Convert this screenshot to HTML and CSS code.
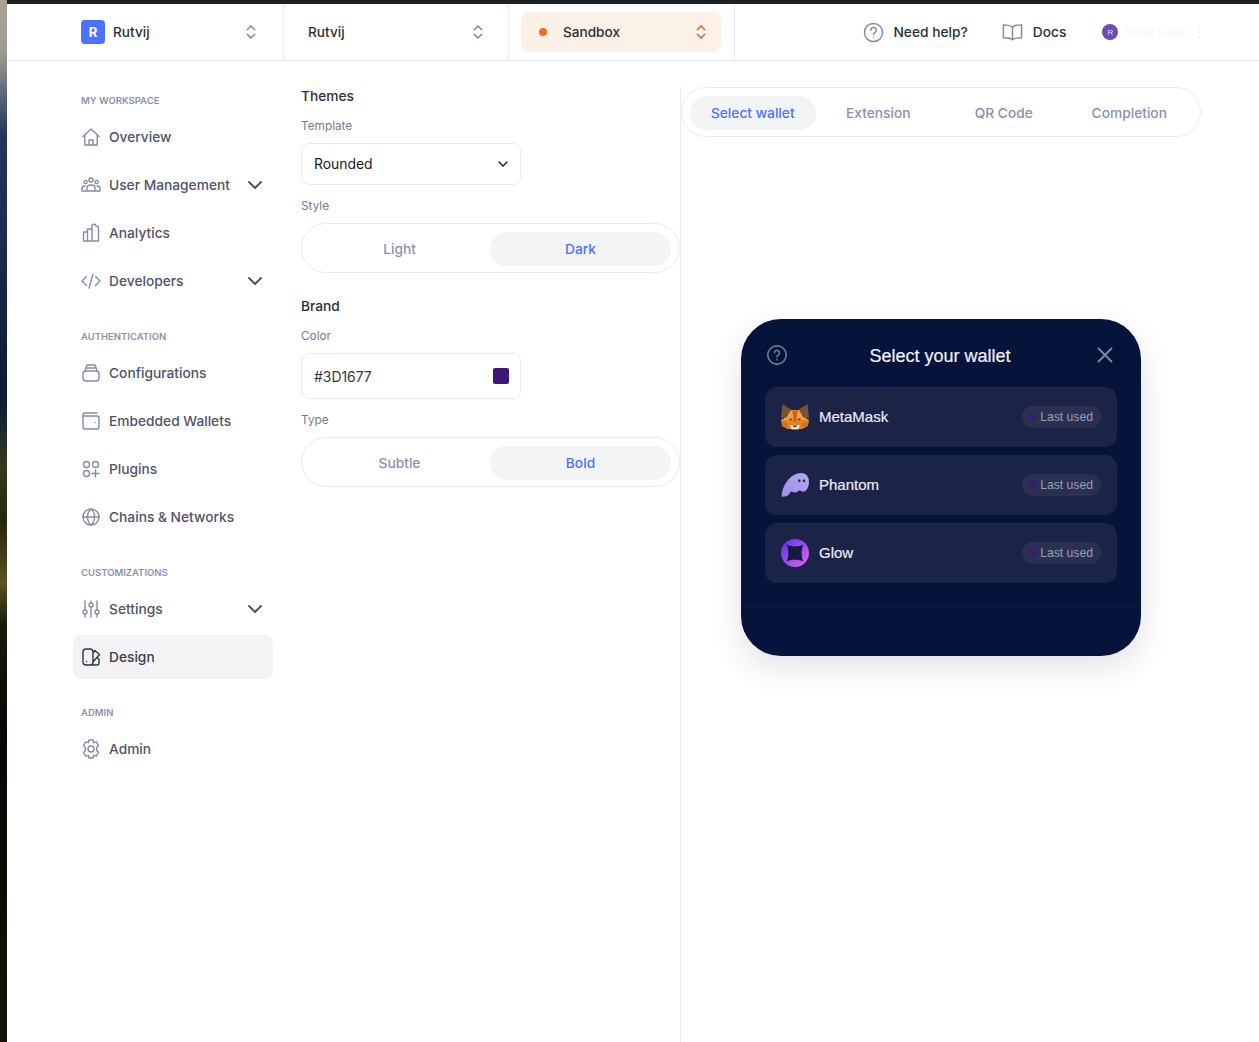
FILE: index.html
```html
<!DOCTYPE html>
<html lang="en">
<head>
<meta charset="utf-8">
<title>Design</title>
<link rel="stylesheet" href="styles.css">
</head>
<body>
<div class="page">
  <div class="wallpaper"></div>
  <div class="app">
    <div class="topline"></div>
    <header class="header">
      <div class="hsec hsec-org">
        <span class="logo">R</span><span class="hname">Rutvij</span>
        <svg class="updown" viewBox="0 0 12 16"><path d="M2 6l4-4 4 4M2 10l4 4 4-4"/></svg>
      </div>
      <div class="hsec hsec-proj">
        <span class="hname">Rutvij</span>
        <svg class="updown" viewBox="0 0 12 16"><path d="M2 6l4-4 4 4M2 10l4 4 4-4"/></svg>
      </div>
      <div class="hsec hsec-env">
        <div class="envpill">
          <span class="envdot"></span><span class="hname">Sandbox</span>
          <svg class="updown updown-env" viewBox="0 0 12 16"><path d="M2 6l4-4 4 4M2 10l4 4 4-4"/></svg>
        </div>
      </div>
      <div class="hright">
        <a class="hlink">
          <svg class="hicon" viewBox="0 0 22 22"><circle cx="11" cy="11" r="9.5"/><path d="M8.3 8.6a2.8 2.8 0 1 1 4.2 2.4c-1 .6-1.5 1.1-1.5 2.2"/><path d="M11 16.2v.1"/></svg>
          <span>Need help?</span>
        </a>
        <a class="hlink hlink-docs">
          <svg class="hicon hicon-book" viewBox="0 0 22 18"><path d="M11 4C9.5 2.2 6.500 1.500 1.500 1.500v13.500c5 0 8 .5 9.500 2 1.500-1.500 4.500-2 9.500-2V1.500C15.500 1.500 12.500 2.200 11 4zM11 4v13"/></svg>
          <span>Docs</span>
        </a>
        <div class="user">
          <span class="avatar">R</span>
          <span class="username">Rutvij Patel</span>
          <span class="kebab">⋮</span>
        </div>
      </div>
    </header>
    <main class="main">
      <nav class="sidebar">
        <div class="navlabel">MY WORKSPACE</div>
        <a class="navitem">
          <svg class="navicon" viewBox="0 0 20 20"><path d="M2 9.500L10 2l8 7.500M3.800 8v10h12.400V8M8 18v-5h4v5"/></svg>
          <span>Overview</span>
        </a>
        <a class="navitem">
          <svg class="navicon" viewBox="0 0 20 20"><circle cx="10" cy="5" r="2"/><circle cx="4.500" cy="7" r="1.600"/><circle cx="15.500" cy="7" r="1.600"/><path d="M6 16v-3.500c0-1.500 1.500-2.500 4-2.500s4 1 4 2.500V16M1 16v-2.500c0-1.500 1-2.500 3-2.500M19 16v-2.500c0-1.500-1-2.500-3-2.500M1 16h18"/></svg>
          <span>User Management</span>
          <svg class="navcaret" viewBox="0 0 14 8"><path d="M1 1l6 6 6-6"/></svg>
        </a>
        <a class="navitem">
          <svg class="navicon" viewBox="0 0 20 20"><path d="M2.500 9h4v9h-4zM6.500 6h4.500v12H6.500zM11 3.500a2 2 0 0 1 4-.5h.5a2 2 0 0 1 2 2v13H11z"/></svg>
          <span>Analytics</span>
        </a>
        <a class="navitem">
          <svg class="navicon" viewBox="0 0 20 20"><path d="M5.500 5.500L1 10l4.500 4.500M14.500 5.500L19 10l-4.500 4.500M12 3L8 17"/></svg>
          <span>Developers</span>
          <svg class="navcaret" viewBox="0 0 14 8"><path d="M1 1l6 6 6-6"/></svg>
        </a>

        <div class="navlabel navlabel-next">AUTHENTICATION</div>
        <a class="navitem">
          <svg class="navicon" viewBox="0 0 20 20"><rect x="2" y="8" width="16" height="10" rx="3"/><path d="M4 8l1.500-5a1.500 1.500 0 0 1 1.500-1h6a1.500 1.500 0 0 1 1.500 1L16 8M5 5h10"/></svg>
          <span>Configurations</span>
        </a>
        <a class="navitem">
          <svg class="navicon" viewBox="0 0 20 20"><path d="M16 2H4a2 2 0 0 0-2 2v12a2 2 0 0 0 2 2h12a2 2 0 0 0 2-2V7a2 2 0 0 0-2-2H2M14 11.500h.1"/></svg>
          <span>Embedded Wallets</span>
        </a>
        <a class="navitem">
          <svg class="navicon" viewBox="0 0 20 20"><circle cx="5.500" cy="5.500" r="3"/><circle cx="14.500" cy="5.500" r="3"/><circle cx="5.500" cy="14.500" r="3"/><path d="M14.500 11v7M11 14.500h7"/></svg>
          <span>Plugins</span>
        </a>
        <a class="navitem">
          <svg class="navicon" viewBox="0 0 20 20"><circle cx="10" cy="10" r="8"/><path d="M2 10h16M10 2c-2.500 2.200-3.500 5-3.500 8s1 5.800 3.500 8c2.500-2.200 3.500-5 3.500-8s-1-5.800-3.500-8z"/></svg>
          <span>Chains &amp; Networks</span>
        </a>

        <div class="navlabel navlabel-next">CUSTOMIZATIONS</div>
        <a class="navitem">
          <svg class="navicon" viewBox="0 0 20 20"><path d="M4 2v9M4 15v3M10 2v2M10 8v10M16 2v9M16 15v3"/><circle cx="4" cy="13" r="2"/><circle cx="10" cy="6" r="2"/><circle cx="16" cy="13" r="2"/></svg>
          <span>Settings</span>
          <svg class="navcaret" viewBox="0 0 14 8"><path d="M1 1l6 6 6-6"/></svg>
        </a>
        <a class="navitem navitem-active">
          <svg class="navicon" viewBox="0 0 20 20"><path d="M5 2h4a3 3 0 0 1 3 3v10a3 3 0 0 1-3 3H5a3 3 0 0 1-3-3V5a3 3 0 0 1 3-3zM12 6l2-2.500 4.500 4-6.500 7.500M9 18h7a2 2 0 0 0 2-2v-4l-1.500-1M5.500 14.500h.1"/></svg>
          <span>Design</span>
        </a>

        <div class="navlabel navlabel-next">ADMIN</div>
        <a class="navitem">
          <svg class="navicon navicon-gear" viewBox="0 0 20 20"><circle cx="10" cy="10" r="3"/><path d="M8 1h4l.7 2.700 2.600-.8 2.200 3.500-1.900 2v3.200l1.900 2-2.200 3.500-2.600-.8L12 19H8l-.7-2.700-2.600.8-2.200-3.500 1.900-2V8.400l-1.900-2 2.200-3.500 2.600.8z"/></svg>
          <span>Admin</span>
        </a>
      </nav>

      <section class="themes">
        <h2 class="heading">Themes</h2>
        <label class="fieldlabel">Template</label>
        <div class="select">
          <span>Rounded</span>
          <svg class="selectcaret" viewBox="0 0 10 6"><path d="M1 1l4 4 4-4"/></svg>
        </div>
        <label class="fieldlabel fieldlabel-next">Style</label>
        <div class="toggle">
          <span class="toggleopt">Light</span>
          <span class="toggleopt toggleopt-on">Dark</span>
        </div>
        <h2 class="heading heading-next">Brand</h2>
        <label class="fieldlabel">Color</label>
        <div class="colorfield">
          <span class="colorvalue">#3D1677</span>
          <span class="swatch"></span>
        </div>
        <label class="fieldlabel fieldlabel-next">Type</label>
        <div class="toggle">
          <span class="toggleopt">Subtle</span>
          <span class="toggleopt toggleopt-on">Bold</span>
        </div>
      </section>

      <section class="preview">
        <div class="tabs">
          <span class="tab tab-on">Select wallet</span>
          <span class="tab">Extension</span>
          <span class="tab">QR Code</span>
          <span class="tab">Completion</span>
        </div>
        <div class="modal">
          <div class="modalhead">
            <svg class="modalicon" viewBox="0 0 20 20"><circle cx="10" cy="10" r="9.200"/><path d="M7.500 7.800a2.500 2.500 0 1 1 3.800 2.200c-.9.500-1.300 1-1.300 1.900M10 14.500v.2"/></svg>
            <span class="modaltitle">Select your wallet</span>
            <svg class="modalicon modalclose" viewBox="0 0 16 16"><path d="M1.500 1.500l13 13M14.500 1.500l-13 13"/></svg>
          </div>
          <div class="walletlist">
            <div class="wallet">
              <svg class="walleticon" viewBox="0 0 28 26">
                <path fill="#7b5232" d="M1.500 0L11 6h6l9.500-6L28 14H0z"/>
                <path fill="#e8812a" d="M6 13l4-7h8l4 7 6 3-1 6-6 3H7l-6-3-1-6z"/>
                <path fill="#f3a04a" d="M10 6l3 7-5 3-8 0 6-3zM18 6l-3 7 5 3 8 0-6-3z"/>
                <path fill="#c9651d" d="M11.500 7h5L15 18h-2z"/>
                <path fill="#2b2420" d="M8 14.500l3 .5-1.500 1.500zM20 14.500l-3 .5 1.500 1.500z"/>
                <path fill="#cf7424" d="M1 18l6 1 1 4-7-1zM27 18l-6 1-1 4 7-1z"/>
                <path fill="#e9dccf" d="M9 21h10l-1.500 4.500h-7z"/>
                <path fill="#3b3632" d="M11.800 21.500h4.400l-1 1.500h-2.400z"/>
              </svg>
              <span class="walletname">MetaMask</span>
              <span class="lastused"><i class="lastdot"></i>Last used</span>
            </div>
            <div class="wallet">
              <svg class="walleticon" viewBox="0 0 28 28">
                <defs><linearGradient id="ph" x1="0" y1="1" x2="1" y2="0"><stop offset="0" stop-color="#9f8fe6"/><stop offset="1" stop-color="#b3a8ee"/></linearGradient></defs>
                <path fill="url(#ph)" d="M.7 25C1 15 9 2 20.700 2 25 2 28 6 28 10.700 28 16 25.500 20.700 22 20.700 20.500 20.700 20 19.500 18.500 19.500 17 19.500 16.500 21.500 14 21.500 12 21.500 11.500 20.500 10.500 20.500 9 20.500 8.500 24.700 5 25.200 3 25.500 1 26.500.7 25z"/>
                <ellipse cx="18.300" cy="9.700" rx="1.200" ry="1.500" fill="#232a4d"/><ellipse cx="23" cy="9.700" rx="1.200" ry="1.500" fill="#232a4d"/>
              </svg>
              <span class="walletname">Phantom</span>
              <span class="lastused"><i class="lastdot"></i>Last used</span>
            </div>
            <div class="wallet">
              <svg class="walleticon" viewBox="0 0 28 28">
                <defs><linearGradient id="gl" x1="0" y1="0" x2="1" y2="1"><stop offset="0" stop-color="#5b2df0"/><stop offset="1" stop-color="#e06ae8"/></linearGradient></defs>
                <circle cx="14" cy="14" r="14" fill="url(#gl)"/>
                <path fill="#111a3f" d="M5.500 5.500C10 8 18 8 22.500 5.500 20 10 20 18 22.500 22.500 18 20 10 20 5.500 22.500 8 18 8 10 5.500 5.500z"/>
              </svg>
              <span class="walletname">Glow</span>
              <span class="lastused"><i class="lastdot"></i>Last used</span>
            </div>
          </div>
          <div class="modalfoot"></div>
        </div>
      </section>
    </main>
  </div>
</div>
</body>
</html>
```
FILE: styles.css
```css
* { box-sizing: border-box; }
html, body { margin: 0; padding: 0; height: 100%; background: #fff; }
body { font-family: Inter, "Liberation Sans", sans-serif; overflow: hidden; }
.page { display: flex; height: 1042px; }
.wallpaper {
  width: 7px; flex: none;
  background: linear-gradient(180deg, #a8a294 0, #a09c92 5%, #5d6a7a 9%, #23345e 13%, #1a2a4e 24%, #0c1a34 38%, #1a2a28 41%, #3a3a1e 45%, #28260f 50%, #5a5222 56%, #1a1a0a 60%, #050805 70%, #0c0c04 85%, #16120a 100%);
}
.app { flex: 1; min-width: 0; display: flex; flex-direction: column; }
.topline { height: 4px; background: #1e2124; flex: none; }

.header { height: 57px; flex: none; display: flex; border-bottom: 1px solid #e9e9f1; }
.hsec { display: flex; align-items: center; border-right: 1px solid #e9e9f1; }
.hsec-org { width: 277px; padding-left: 74px; }
.hsec-proj { width: 225px; padding-left: 24px; }
.hsec-env { width: 226px; padding-left: 12px; }
.logo { width: 24px; height: 24px; border-radius: 4px; background: #4c73ff; color: #fff; font-size: 13px; font-weight: 700; display: flex; align-items: center; justify-content: center; margin-right: 8px; }
.hname { font-size: 13.600px; font-weight: 500; color: #2d2f36; }
.updown { width: 12px; height: 16px; fill: none; stroke: #7d7f94; stroke-width: 1.400; margin-left: auto; margin-right: 26px; }
.hsec-proj .updown { margin-right: 24px; }
.envpill { width: 200px; height: 40px; border-radius: 8px; background: #fcf1e7; display: flex; align-items: center; padding-left: 18px; }
.envdot { width: 8px; height: 8px; border-radius: 50%; background: #f5711f; margin-right: 16px; }
.updown-env { stroke: #c9611d; margin-right: 14px; }
.hright { flex: 1; display: flex; align-items: center; justify-content: flex-end; padding-right: 53px; }
.hlink { display: flex; align-items: center; gap: 9px; font-size: 13.750px; font-weight: 500; color: #2d2f36; margin-right: 34px; }
.hlink-docs { gap: 10px; margin-right: 36px; }
.hlink span { padding-bottom: 1px; }
.hicon { width: 21px; height: 21px; fill: none; stroke: #8587a3; stroke-width: 1.500; stroke-linecap: round; }
.hicon-book { height: 18px; }
.user { display: flex; align-items: center; }
.avatar { width: 16px; height: 16px; border-radius: 50%; background: #6e4ab6; color: #e6def5; font-size: 8px; display: flex; align-items: center; justify-content: center; font-family: "Liberation Sans", sans-serif; }
.username { font-family: "Liberation Sans", sans-serif; font-size: 12px; color: #f5f5ff; margin-left: 6px; }
.kebab { color: #f0f0fb; font-size: 14px; margin-left: 7px; line-height: 1; }

.main { flex: 1; display: flex; min-height: 0; }
.sidebar { width: 294px; flex: none; padding: 31px 28px 0 66px; display: flex; flex-direction: column; }
.navlabel { height: 16px; line-height: 18px; font-size: 9.500px; font-weight: 600; color: #8e90ae; padding-left: 8px; margin-bottom: 7px; }
.navlabel-next { margin-top: 25px; }
.navitem { height: 44px; flex: none; display: flex; align-items: center; border-radius: 8px; padding: 0 11px 0 8px; font-size: 13.750px; font-weight: 500; color: #51536d; margin-bottom: 4px; }
.navitem span { padding-bottom: 1px; }
.navitem:has(+ .navlabel) { margin-bottom: 0; }
.navitem-active { background: #f3f3f5; color: #3a3c48; }
.navicon { width: 20px; height: 20px; flex: none; margin-right: 8px; fill: none; stroke: #8789a8; stroke-width: 1.400; stroke-linecap: round; stroke-linejoin: round; }
.navitem-active .navicon { stroke: #33353f; }
.navcaret { width: 14px; height: 8px; margin-left: auto; fill: none; stroke: #4a4c62; stroke-width: 1.800; stroke-linecap: round; stroke-linejoin: round; flex: none; }

.themes { width: 379px; flex: none; padding-top: 25px; display: flex; flex-direction: column; }
.heading { margin: 0 0 12px; font-size: 13.750px; line-height: 20px; font-weight: 500; color: #2d2f36; }
.heading-next { margin-top: 23px; }
.fieldlabel { height: 16px; line-height: 16px; font-size: 11.800px; color: #777a92; margin-bottom: 9px; }
.fieldlabel-next { margin-top: 13px; }
.select, .colorfield { width: 220px; display: flex; align-items: center; justify-content: space-between; border: 1px solid #e9eaf0; border-radius: 8px; font-size: 13.900px; color: #1a1b20; padding: 0 12px; }
.select { height: 42px; }
.select span { padding-bottom: 1px; }
.colorfield { height: 46px; padding-right: 11px; color: #33353f; }
.colorvalue { padding-top: 1px; }
.selectcaret { width: 10px; height: 6px; fill: none; stroke: #1a1b20; stroke-width: 1.400; stroke-linecap: round; stroke-linejoin: round; }
.swatch { width: 16px; height: 16px; border-radius: 2px; background: #3d1677; }
.toggle { width: 379px; height: 50px; display: flex; align-items: center; border: 1px solid #e9eaf0; border-radius: 25px; padding: 2px 8px 0 7px; }
.toggleopt { flex: 1; height: 34px; border-radius: 17px; display: flex; align-items: center; justify-content: center; font-size: 13.750px; font-weight: 500; color: #8d90ab; padding-bottom: 1px; }
.toggleopt-on { background: #f3f4f6; color: #4c73ff; }

.preview { flex: 1; margin-top: 26px; border-left: 1px solid #e9eaf0; min-width: 0; display: flex; flex-direction: column; }
.tabs { width: 520px; height: 50px; flex: none; display: flex; align-items: center; padding: 2px 8px 0; border: 1px solid #e9eaf0; border-radius: 25px; }
.tab { flex: 1; height: 34px; border-radius: 17px; display: flex; align-items: center; justify-content: center; font-size: 13.750px; font-weight: 500; color: #8d90ab; padding-bottom: 1px; }
.tab-on { background: #f3f4f6; color: #4c73ff; }

.modal { width: 400px; height: 337px; margin: 182px 0 0 60px; border-radius: 40px; background: #06133a; box-shadow: 0 12px 32px rgba(6, 19, 58, 0.12); display: flex; flex-direction: column; font-family: "Liberation Sans", sans-serif; overflow: hidden; flex: none; }
.modalhead { height: 68px; flex: none; display: flex; align-items: center; justify-content: space-between; padding: 4px 28px 0 26px; }
.modalicon { width: 20px; height: 20px; fill: none; stroke: #6d7390; stroke-width: 1.700; stroke-linecap: round; }
.modalclose { width: 16px; height: 16px; stroke: #8489a2; stroke-width: 1.800; }
.modaltitle { font-size: 18px; color: #eef0f8; -webkit-text-stroke: 0.200px #eef0f8; margin: 2px 4px 0 0; }
.walletlist { display: flex; flex-direction: column; gap: 8px; padding: 0 24px; }
.wallet { height: 60px; border-radius: 12px; background: #1b2447; display: flex; align-items: center; padding: 0 16px; }
.walleticon { width: 28px; height: 28px; flex: none; margin-right: 10px; }
.walletname { font-size: 15px; color: #e9ebf5; -webkit-text-stroke: 0.200px #e9ebf5; padding-bottom: 2px; }
.lastused { margin-left: auto; height: 22px; border-radius: 11px; background: #2a3052; display: flex; align-items: center; padding: 0 8px; font-size: 12.200px; color: #9a9db3; }
.lastdot { width: 6px; height: 6px; border-radius: 50%; background: #3d1677; margin-right: 4px; }
.modalfoot { flex: 1; margin-top: 23px; border-top: 1px solid #141c38; }
```
